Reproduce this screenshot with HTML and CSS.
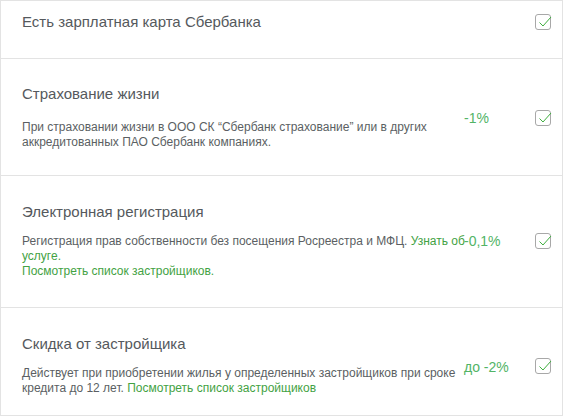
FILE: index.html
```html
<!DOCTYPE html>
<html lang="ru">
<head>
<meta charset="utf-8">
<link rel="stylesheet" href="styles.css">
</head>
<body>
<div class="list">
  <div class="row row-first">
    <div class="info">
      <div class="title">Есть зарплатная карта Сбербанка</div>
    </div>
    <div class="pct"></div>
    <span class="check"><svg viewBox="0 0 20 20" width="20" height="20"><path d="M4.5 10.5 L8 14 L16 5" fill="none" stroke="#3fae3f" stroke-width="1"/></svg></span>
  </div>
  <div class="row row-life">
    <div class="info">
      <div class="title">Страхование жизни</div>
      <p class="desc">При страховании жизни в ООО СК “Сбербанк страхование” или в других аккредитованных ПАО Сбербанк компаниях.</p>
    </div>
    <div class="pct">-1%</div>
    <span class="check"><svg viewBox="0 0 20 20" width="20" height="20"><path d="M4.5 10.5 L8 14 L16 5" fill="none" stroke="#3fae3f" stroke-width="1"/></svg></span>
  </div>
  <div class="row row-reg">
    <div class="info">
      <div class="title">Электронная регистрация</div>
      <p class="desc">Регистрация прав собственности без посещения Росреестра и МФЦ. <a class="link">Узнать об услуге.</a></p>
      <p class="desc"><a class="link">Посмотреть список застройщиков.</a></p>
    </div>
    <div class="pct">-0,1%</div>
    <span class="check"><svg viewBox="0 0 20 20" width="20" height="20"><path d="M4.5 10.5 L8 14 L16 5" fill="none" stroke="#3fae3f" stroke-width="1"/></svg></span>
  </div>
  <div class="row row-dev">
    <div class="info">
      <div class="title">Скидка от застройщика</div>
      <p class="desc">Действует при приобретении жилья у определенных застройщиков при сроке кредита до 12 лет. <a class="link">Посмотреть список застройщиков</a></p>
    </div>
    <div class="pct">до -2%</div>
    <span class="check"><svg viewBox="0 0 20 20" width="20" height="20"><path d="M4.5 10.5 L8 14 L16 5" fill="none" stroke="#3fae3f" stroke-width="1"/></svg></span>
  </div>
</div>
</body>
</html>
```
FILE: styles.css
```css
html, body {
  margin: 0;
  padding: 0;
  background: #fff;
}
body {
  font-family: "Liberation Sans", Arial, sans-serif;
  color: #5b5f63;
}
.list {
  width: 561px;
  border: 1px solid #e3e3e3;
  border-bottom: none;
}
.row {
  display: flex;
  align-items: center;
  border-bottom: 1px solid #e3e3e3;
  padding: 26px 0 25px 21px;
}
.row-first {
  align-items: flex-start;
  padding-top: 12px;
  padding-bottom: 27px;
  height: 18px;
}
.row-first .check {
  margin-top: 1px;
}
.row-reg {
  padding-top: 27px;
  padding-bottom: 28px;
}
.row-dev {
  padding-top: 27px;
  padding-bottom: 19px;
}
.info {
  width: 442px;
  flex: none;
}
.title {
  font-size: 15px;
  line-height: 18px;
  color: #55595d;
  margin-bottom: 17px;
}
.row-reg .title,
.row-dev .title {
  margin-bottom: 13px;
}
.row-first .title {
  margin-bottom: 0;
}
.desc {
  margin: 0;
  font-size: 12px;
  line-height: 15px;
  color: #5b5f63;
}
.link {
  color: #43a243;
}
.row-reg .desc:first-of-type {
  margin-right: -20px;
}
.pct {
  width: 71px;
  flex: none;
  font-size: 14px;
  color: #52b466;
  line-height: 18px;
}
.row-dev .pct {
  margin-top: 2px;
}
.check {
  width: 14px;
  height: 14px;
  border: 1px solid #a8a8a8;
  border-radius: 3px;
  position: relative;
  flex: none;
}
.check svg {
  position: absolute;
  left: -1px;
  top: -3px;
}
```
